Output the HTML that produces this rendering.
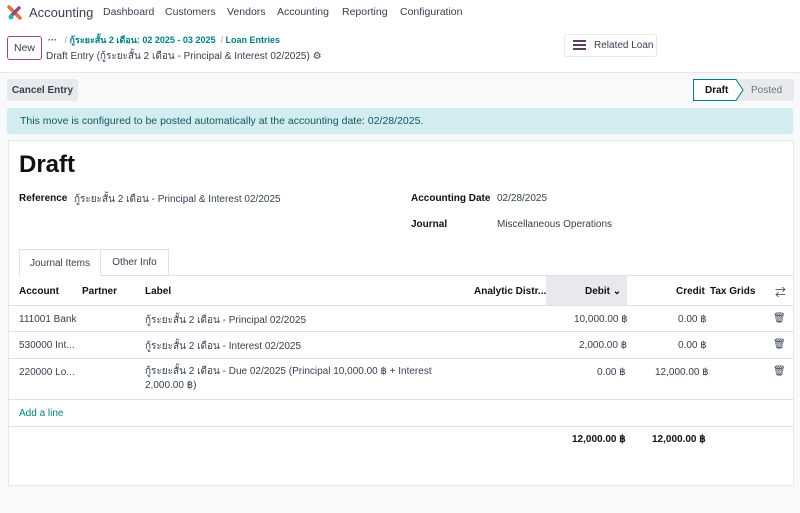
<!DOCTYPE html>
<html><head><meta charset="utf-8"><style>
*{box-sizing:border-box;margin:0;padding:0}
body{width:800px;height:513px;overflow:hidden;background:#f8f9fa;font-family:"Liberation Sans","Noto Sans CJK SC",sans-serif;font-size:10px;color:#374151;position:relative}
.a{position:absolute;white-space:nowrap}
.c{display:flex;align-items:center;justify-content:center}
.teal{color:#017e84}
b{font-weight:bold}
</style></head><body>
<div class="a" style="left:0;top:0;width:800px;height:73px;background:#fff;border-bottom:1px solid #e5e7eb"></div>
<svg class="a" style="left:7px;top:5px" width="15" height="15" viewBox="0 0 15 15"><path d="M2 2 L13 13" stroke="#e46f3b" stroke-width="3.5" stroke-linecap="round"/><path d="M12 3 L5 10" stroke="#8f4a8a" stroke-width="3.5" stroke-linecap="round"/><circle cx="4" cy="12" r="2.5" fill="#21b6b0"/></svg>
<div class="a" style="left:29px;top:5px;font-size:13px;color:#374151">Accounting</div>
<div class="a" style="left:103px;top:6px;font-size:10.5px">Dashboard</div>
<div class="a" style="left:165px;top:6px;font-size:10.5px">Customers</div>
<div class="a" style="left:227px;top:6px;font-size:10.5px">Vendors</div>
<div class="a" style="left:277px;top:6px;font-size:10.5px">Accounting</div>
<div class="a" style="left:342px;top:6px;font-size:10.5px">Reporting</div>
<div class="a" style="left:400px;top:6px;font-size:10.5px">Configuration</div>
<div class="a c" style="left:7px;top:36px;width:35px;height:24px;border:1px solid #8f4a8a;border-radius:3px;font-size:10.5px">New</div>
<div class="a" style="left:48px;top:33px;font-size:9px"><b>···</b> &nbsp; <span style="color:#999">/</span> <b class="teal">กู้ระยะสั้น 2 เดือน: 02 2025 - 03 2025</b> &nbsp;<span style="color:#999">/</span> <b class="teal">Loan Entries</b></div>
<div class="a" style="left:46px;top:49px;font-size:10px">Draft Entry (กู้ระยะสั้น 2 เดือน - Principal &amp; Interest 02/2025) ⚙</div>
<div class="a" style="left:564px;top:34px;width:93px;height:23px;border:1px solid #e5e7eb;border-radius:3px;background:#fff;display:flex;align-items:center;padding-left:29px;font-size:10px">Related Loan</div>
<div class="a" style="left:573px;top:40px;width:13px;height:2px;background:#5c3d5c;box-shadow:0 4px 0 #5c3d5c,0 8px 0 #5c3d5c"></div>
<div class="a c" style="left:7px;top:79px;width:71px;height:22px;background:#e7e9ed;border-radius:3px;font-weight:bold;color:#374151">Cancel Entry</div>
<div class="a" style="left:693px;top:79px;width:101px;height:22px;background:#e7e9ed"></div>
<svg class="a" style="left:693px;top:79px" width="60" height="22"><path d="M0.5 0.5 H43 L50 11 L43 21.5 H0.5 Z" fill="#fff" stroke="#017e84"/></svg>
<div class="a" style="left:705px;top:85px;font-weight:bold;color:#111">Draft</div>
<div class="a" style="left:751px;top:85px;color:#6b7280">Posted</div>
<div class="a" style="left:7px;top:108px;width:786px;height:26px;background:#d2ecef;border-radius:3px;display:flex;align-items:center;padding-left:13px;color:#0e5a63;font-size:10.5px">This move is configured to be posted automatically at the accounting date: 02/28/2025.</div>
<div class="a" style="left:8px;top:140px;width:786px;height:346px;background:#fff;border:1px solid #e5e7eb"></div>
<div class="a" style="left:19px;top:151px;font-size:24px;font-weight:bold;color:#111">Draft</div>
<div class="a" style="left:19px;top:193px;font-weight:bold;color:#111">Reference</div>
<div class="a" style="left:74px;top:192px">กู้ระยะสั้น 2 เดือน - Principal &amp; Interest 02/2025</div>
<div class="a" style="left:411px;top:193px;font-weight:bold;color:#111">Accounting Date</div>
<div class="a" style="left:497px;top:193px">02/28/2025</div>
<div class="a" style="left:411px;top:219px;font-weight:bold;color:#111">Journal</div>
<div class="a" style="left:497px;top:219px">Miscellaneous Operations</div>
<div class="a" style="left:19px;top:275px;width:774px;height:1px;background:#dee2e6"></div>
<div class="a c" style="left:19px;top:249px;width:82px;height:27px;background:#fff;border:1px solid #dee2e6;border-bottom:none">Journal Items</div>
<div class="a c" style="left:101px;top:249px;width:68px;height:26px;border:1px solid #dee2e6;border-left:none;border-bottom:none">Other Info</div>
<div class="a" style="left:546px;top:276px;width:81px;height:29px;background:#e7e9ed"></div>
<div class="a" style="left:19px;top:286px;font-weight:bold;color:#111">Account</div>
<div class="a" style="left:82px;top:286px;font-weight:bold;color:#111">Partner</div>
<div class="a" style="left:145px;top:286px;font-weight:bold;color:#111">Label</div>
<div class="a" style="left:474px;top:286px;font-weight:bold;color:#111">Analytic Distr...</div>
<div class="a" style="left:585px;top:286px;font-weight:bold;color:#111">Debit ⌄</div>
<div class="a" style="left:676px;top:286px;font-weight:bold;color:#111">Credit</div>
<div class="a" style="left:710px;top:286px;font-weight:bold;color:#111">Tax Grids</div>
<div class="a" style="left:775px;top:284px;font-size:11px">⇄</div>
<div class="a" style="left:8px;top:305px;width:786px;height:1px;background:#dee2e6"></div>
<div class="a" style="left:19px;top:314px">111001 Bank</div><div class="a" style="left:145px;top:313px">กู้ระยะสั้น 2 เดือน - Principal 02/2025</div>
<div class="a" style="left:574px;top:314px">10,000.00 ฿</div><div class="a" style="left:678px;top:314px">0.00 ฿</div><div class="a" style="left:773px;top:313px">🗑</div>
<div class="a" style="left:8px;top:331px;width:786px;height:1px;background:#dee2e6"></div>
<div class="a" style="left:19px;top:340px">530000 Int...</div><div class="a" style="left:145px;top:339px">กู้ระยะสั้น 2 เดือน - Interest 02/2025</div>
<div class="a" style="left:579px;top:340px">2,000.00 ฿</div><div class="a" style="left:678px;top:340px">0.00 ฿</div><div class="a" style="left:773px;top:339px">🗑</div>
<div class="a" style="left:8px;top:358px;width:786px;height:1px;background:#dee2e6"></div>
<div class="a" style="left:19px;top:367px">220000 Lo...</div><div class="a" style="left:145px;top:365px;line-height:14px">กู้ระยะสั้น 2 เดือน - Due 02/2025 (Principal 10,000.00 ฿ + Interest<br>2,000.00 ฿)</div>
<div class="a" style="left:597px;top:367px">0.00 ฿</div><div class="a" style="left:655px;top:367px">12,000.00 ฿</div><div class="a" style="left:773px;top:366px">🗑</div>
<div class="a" style="left:8px;top:399px;width:786px;height:1px;background:#dee2e6"></div>
<div class="a teal" style="left:19px;top:408px">Add a line</div>
<div class="a" style="left:8px;top:426px;width:786px;height:1px;background:#dee2e6"></div>
<div class="a" style="left:572px;top:434px;font-weight:bold;color:#111">12,000.00 ฿</div>
<div class="a" style="left:652px;top:434px;font-weight:bold;color:#111">12,000.00 ฿</div>
</body></html>
